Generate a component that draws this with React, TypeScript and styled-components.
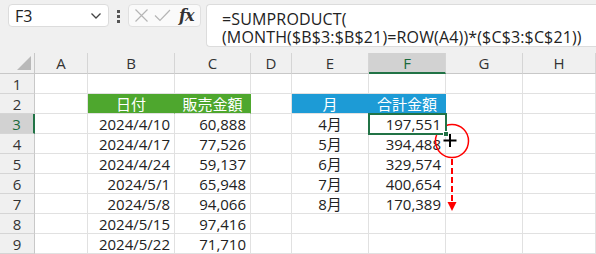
import styled, { createGlobalStyle } from "styled-components";

const GlobalStyle = createGlobalStyle`
  body {
    margin: 0;
    background: #f0f0f0;
  }
  * {
    box-sizing: border-box;
  }
`;

const Window = styled.div`
  position: relative;
  width: 596px;
  height: 254px;
  overflow: hidden;
  background: #f0f0f0;
  font-family: "Open Sans", "Noto Sans CJK JP", sans-serif;
  color: #222;
`;

const FormulaBar = styled.div`
  display: flex;
  align-items: flex-start;
  height: 53px;
  padding: 4px 0 0 8px;
`;

const NameBox = styled.div`
  display: flex;
  align-items: center;
  justify-content: space-between;
  width: 101px;
  height: 23px;
  padding: 0 6px 0 6px;
  background: #fff;
  border: 1px solid #dcdcdc;
  border-radius: 4px;
  font-size: 16px;
`;

const Dots = styled.div`
  display: flex;
  flex-direction: column;
  gap: 2px;
  margin: 6px 8px 0 8px;
  span {
    width: 3px;
    height: 3px;
    background: #555;
  }
`;

const FxBox = styled.div`
  display: flex;
  align-items: center;
  gap: 5px;
  width: 73px;
  height: 23px;
  padding: 0 5px;
  background: #fafafa;
  border: 1px solid #e0e0e0;
  border-radius: 4px;
`;

const Fx = styled.span`
  font-family: "DejaVu Serif", "Liberation Serif", serif;
  font-style: italic;
  font-weight: bold;
  font-size: 16px;
  letter-spacing: -1px;
  color: #333;
  margin-left: 3px;
`;

const FormulaBox = styled.div`
  flex: 1;
  height: 43px;
  margin-left: 5px;
  padding: 5px 0 0 15px;
  background: #fff;
  border: 1px solid #dcdcdc;
  border-right: none;
  border-radius: 4px 0 0 4px;
  font-size: 16px;
  letter-spacing: 0.15px;
  line-height: 18px;
  white-space: pre;
`;

const Sheet = styled.div`
  display: grid;
  grid-template-columns: 35px 53px 87px 76px 41px 77px 77px 77px 73px;
  grid-template-rows: 21px repeat(9, 20px);
  background: #fff;
`;

const ColHead = styled.div<{ $active?: boolean }>`
  display: flex;
  align-items: center;
  justify-content: center;
  background: ${(p) => (p.$active ? "#d2d2d2" : "#f0f0f0")};
  border-right: 1px solid #d5d5d5;
  border-bottom: ${(p) => (p.$active ? "2px solid #217346" : "1px solid #c8c8c8")};
  color: ${(p) => (p.$active ? "#1a6a3c" : "#333")};
  font-size: 15px;
`;

const Corner = styled.div`
  position: relative;
  background: #f0f0f0;
  border-right: 1px solid #c8c8c8;
  border-bottom: 1px solid #c8c8c8;
  &::after {
    content: "";
    position: absolute;
    right: 3px;
    bottom: 3px;
    border-style: solid;
    border-width: 0 0 14px 14px;
    border-color: transparent transparent #b9b9b9 transparent;
  }
`;

const RowHead = styled.div<{ $active?: boolean }>`
  display: flex;
  align-items: center;
  justify-content: center;
  background: ${(p) => (p.$active ? "#d2d2d2" : "#f0f0f0")};
  border-right: ${(p) => (p.$active ? "2px solid #217346" : "1px solid #c8c8c8")};
  border-bottom: 1px solid #d5d5d5;
  color: ${(p) => (p.$active ? "#1a6a3c" : "#333")};
  font-size: 15px;
`;

const Cell = styled.div<{ $align?: string; $fill?: string; $selected?: boolean }>`
  position: relative;
  display: flex;
  align-items: center;
  justify-content: ${(p) => p.$align || "flex-end"};
  padding: 0 4px;
  background: ${(p) => p.$fill || "#fff"};
  color: ${(p) => (p.$fill ? "#fff" : "#222")};
  border-right: 1px solid ${(p) => (p.$fill ? p.$fill : "#e1e1e1")};
  border-bottom: 1px solid #e1e1e1;
  font-size: 15px;
  white-space: nowrap;
  ${(p) =>
    p.$selected &&
    `
    outline: 2px solid #217346;
    outline-offset: -1px;
    z-index: 1;
  `}
`;

const Handle = styled.span`
  position: absolute;
  right: -4px;
  bottom: -4px;
  width: 6px;
  height: 6px;
  background: #217346;
  border: 1px solid #fff;
`;

const Overlay = styled.svg`
  position: absolute;
  left: 0;
  top: 0;
  pointer-events: none;
`;

const GREEN = "#4ea72e";
const BLUE = "#1d9bd6";

const cols = ["A", "B", "C", "D", "E", "F", "G", "H"];

type Row = { b?: string; c?: string; e?: string; f?: string; head?: boolean };

const rows: Row[] = [
  {},
  { b: "日付", c: "販売金額", e: "月", f: "合計金額", head: true },
  { b: "2024/4/10", c: "60,888", e: "4月", f: "197,551" },
  { b: "2024/4/17", c: "77,526", e: "5月", f: "394,488" },
  { b: "2024/4/24", c: "59,137", e: "6月", f: "329,574" },
  { b: "2024/5/1", c: "65,948", e: "7月", f: "400,654" },
  { b: "2024/5/8", c: "94,066", e: "8月", f: "170,389" },
  { b: "2024/5/15", c: "97,416" },
  { b: "2024/5/22", c: "71,710" },
];

export default function App() {
  return (
    <Window>
      <GlobalStyle />
      <FormulaBar>
        <NameBox>
          F3
          <svg width="12" height="8" viewBox="0 0 12 8">
            <path d="M1.5 1.5 L6 6 L10.5 1.5" fill="none" stroke="#444" strokeWidth="1.3" />
          </svg>
        </NameBox>
        <Dots>
          <span />
          <span />
          <span />
        </Dots>
        <FxBox>
          <svg width="15" height="15" viewBox="0 0 15 15">
            <path d="M1.5 1.5 L13.5 13.5 M13.5 1.5 L1.5 13.5" stroke="#b5b5b5" strokeWidth="1.2" />
          </svg>
          <svg width="17" height="15" viewBox="0 0 17 15">
            <path d="M1 7.5 L6 12.5 L16 2" fill="none" stroke="#b5b5b5" strokeWidth="1.2" />
          </svg>
          <Fx>fx</Fx>
        </FxBox>
        <FormulaBox>
          {"=SUMPRODUCT(\n(MONTH($B$3:$B$21)=ROW(A4))*($C$3:$C$21))"}
        </FormulaBox>
      </FormulaBar>
      <Sheet>
        <Corner />
        {cols.map((c) => (
          <ColHead key={c} $active={c === "F"}>
            {c}
          </ColHead>
        ))}
        {rows.map((r, i) => {
          const n = i + 1;
          return [
            <RowHead key={`h${n}`} $active={n === 3}>
              {n}
            </RowHead>,
            <Cell key={`a${n}`} />,
            <Cell key={`b${n}`} $align={r.head ? "center" : "flex-end"} $fill={r.head ? GREEN : undefined}>
              {r.b}
            </Cell>,
            <Cell key={`c${n}`} $align={r.head ? "center" : "flex-end"} $fill={r.head ? GREEN : undefined}>
              {r.c}
            </Cell>,
            <Cell key={`d${n}`} />,
            <Cell key={`e${n}`} $align="center" $fill={r.head ? BLUE : undefined}>
              {r.e}
            </Cell>,
            <Cell
              key={`f${n}`}
              $align={r.head ? "center" : "flex-end"}
              $fill={r.head ? BLUE : undefined}
              $selected={n === 3}
            >
              {r.f}
              {n === 3 && <Handle />}
            </Cell>,
            <Cell key={`g${n}`} />,
            <Cell key={`h${n}c`} />,
          ];
        })}
      </Sheet>
      <Overlay width="596" height="254" viewBox="0 0 596 254">
        <circle cx="452" cy="141" r="16.5" fill="none" stroke="#ff0000" strokeWidth="1.5" />
        <path d="M450 134 V147 M443.5 140.5 H456.5" stroke="#000" strokeWidth="2" />
        <path d="M452 159 V203" stroke="#ff0000" strokeWidth="2" strokeDasharray="6 3" />
        <path d="M447.5 202 L456.5 202 L452 211 Z" fill="#ff0000" />
      </Overlay>
    </Window>
  );
}
